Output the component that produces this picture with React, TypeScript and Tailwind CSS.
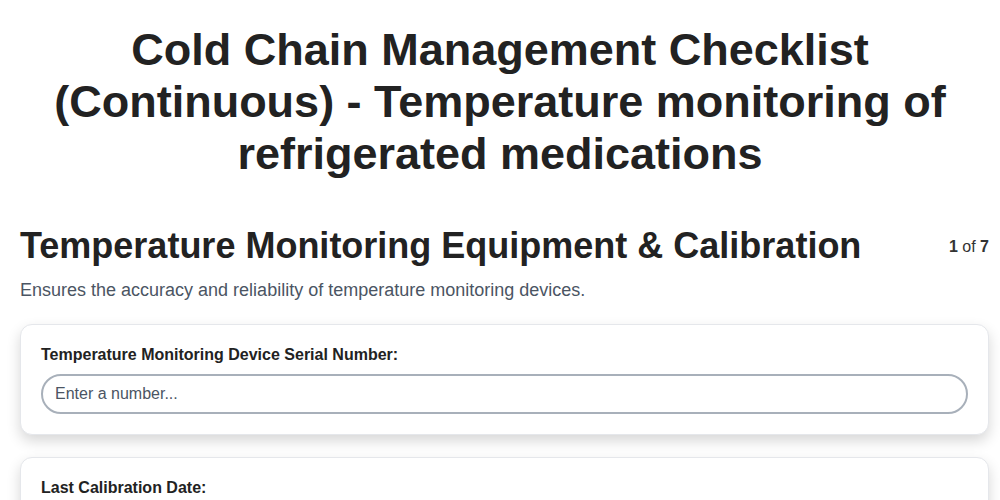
export default function App() {
  return (
    <div className="min-h-screen bg-white pb-10 text-[#222] [font-family:'Liberation_Sans',Arial,sans-serif]">
      <h1 className="mx-auto max-w-[920px] pt-6 text-center text-[45px] font-bold leading-[52px] text-[#222]">
        Cold Chain Management Checklist (Continuous) - Temperature monitoring of refrigerated medications
      </h1>

      <div className="pl-5 pr-[11px]">
        <div className="mt-[44px] flex items-start justify-between">
          <h2 className="text-[36px] font-bold leading-[44px] text-[#222]">
            Temperature Monitoring Equipment &amp; Calibration
          </h2>
          <p className="pt-[11px] text-[16px] text-[#333]">
            <span className="font-bold">1</span> of <span className="font-bold">7</span>
          </p>
        </div>
        <p className="mt-[9px] text-[18px] leading-[27px] text-[#4b5563]">
          Ensures the accuracy and reliability of temperature monitoring devices.
        </p>

        <div className="mt-5 flex flex-col gap-[22px]">
          <div className="rounded-xl border border-[#e5e7eb] bg-white p-5 shadow-[0_6px_14px_rgba(0,0,0,0.16)]">
            <label className="block text-[16px] font-bold leading-[19px] text-[#222]">
              Temperature Monitoring Device Serial Number:
            </label>
            <input
              type="text"
              placeholder="Enter a number..."
              className="mt-[10px] h-10 w-full rounded-[20px] border-2 border-[#a8b0ba] px-3 text-[16px] text-[#333] placeholder:text-[#4b5563] outline-none"
            />
          </div>
          <div className="rounded-xl border border-[#e5e7eb] bg-white p-5 shadow-[0_6px_14px_rgba(0,0,0,0.16)]">
            <label className="block text-[16px] font-bold leading-[19px] text-[#222]">Last Calibration Date:</label>
            <input
              type="date"
              className="mt-[10px] h-10 w-full rounded-[20px] border-2 border-[#a8b0ba] px-3 text-[16px] text-[#333] outline-none"
            />
          </div>
        </div>
      </div>
    </div>
  );
}
